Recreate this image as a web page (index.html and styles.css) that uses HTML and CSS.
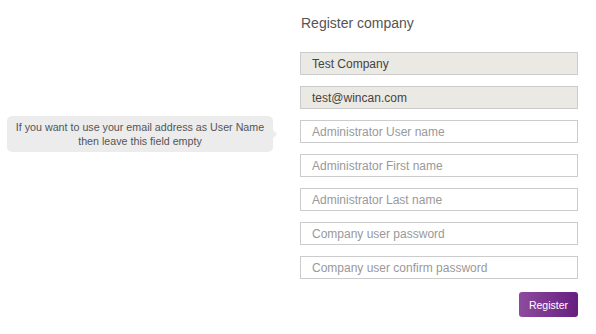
FILE: index.html
```html
<!DOCTYPE html>
<html lang="en">
<head>
    <meta charset="UTF-8">
    <meta name="viewport" content="width=device-width, initial-scale=1.0">
    <title>Register company</title>
    <link rel="stylesheet" href="styles.css">
</head>
<body>

<div class="register-container">
    <h2>Register company</h2>
    <form id="registerForm">
        <div class="form-group">
            <input type="text" class="readonly" value="Test Company" readonly>
        </div>
        <div class="form-group">
            <input type="text" class="readonly" value="test@wincan.com" readonly>
        </div>
        <div class="form-group">
            <input type="text" placeholder="Administrator User name">
            <div class="hint">If you want to use your email address as User Name<br>then leave this field empty</div>
        </div>
        <div class="form-group">
            <input type="text" placeholder="Administrator First name">
        </div>
        <div class="form-group">
            <input type="text" placeholder="Administrator Last name">
        </div>
        <div class="form-group">
            <input type="password" placeholder="Company user password">
        </div>
        <div class="form-group">
            <input type="password" placeholder="Company user confirm password">
        </div>
        <div class="actions">
            <button type="submit">Register</button>
        </div>
    </form>
</div>

</body>
</html>
```

FILE: styles.css
```css
body {
    font-family: "Liberation Sans", Arial, sans-serif;
    background-color: #fff;
    margin: 0;
}
.register-container {
    width: 278px;
    margin-left: 300px;
    padding-top: 15px;
}
h2 {
    font-size: 14px;
    font-weight: normal;
    color: #555;
    margin: 0 0 21px 1px;
    line-height: 16px;
}
.form-group {
    position: relative;
    margin-bottom: 11px;
}
input[type="text"],
input[type="password"] {
    display: block;
    box-sizing: border-box;
    width: 100%;
    height: 23px;
    padding: 0 11px;
    font-family: inherit;
    font-size: 12px;
    color: #444;
    background: #fff;
    border: 1px solid #ccc;
    border-radius: 0;
    outline: none;
}
input::placeholder {
    color: #999;
}
input.readonly {
    background-color: #ebe9e3;
    color: #444;
}
.hint {
    position: absolute;
    right: 305px;
    top: -4px;
    width: 266px;
    box-sizing: border-box;
    padding: 4px 0;
    background: #ececec;
    border-radius: 5px;
    font-size: 10.7px;
    line-height: 14px;
    color: #555;
    text-align: center;
    white-space: nowrap;
}
.hint::after {
    content: "";
    position: absolute;
    right: -4px;
    top: 14px;
    border-top: 4px solid transparent;
    border-bottom: 4px solid transparent;
    border-left: 4px solid #ececec;
}
.actions {
    display: flex;
    justify-content: flex-end;
    padding-top: 2px;
}
button {
    width: 59px;
    height: 25px;
    padding: 0;
    font-family: inherit;
    font-size: 10.5px;
    background: linear-gradient(to right, #8d4b9e, #661f7f);
    color: #fff;
    border: none;
    border-radius: 3px;
    cursor: pointer;
}
```
